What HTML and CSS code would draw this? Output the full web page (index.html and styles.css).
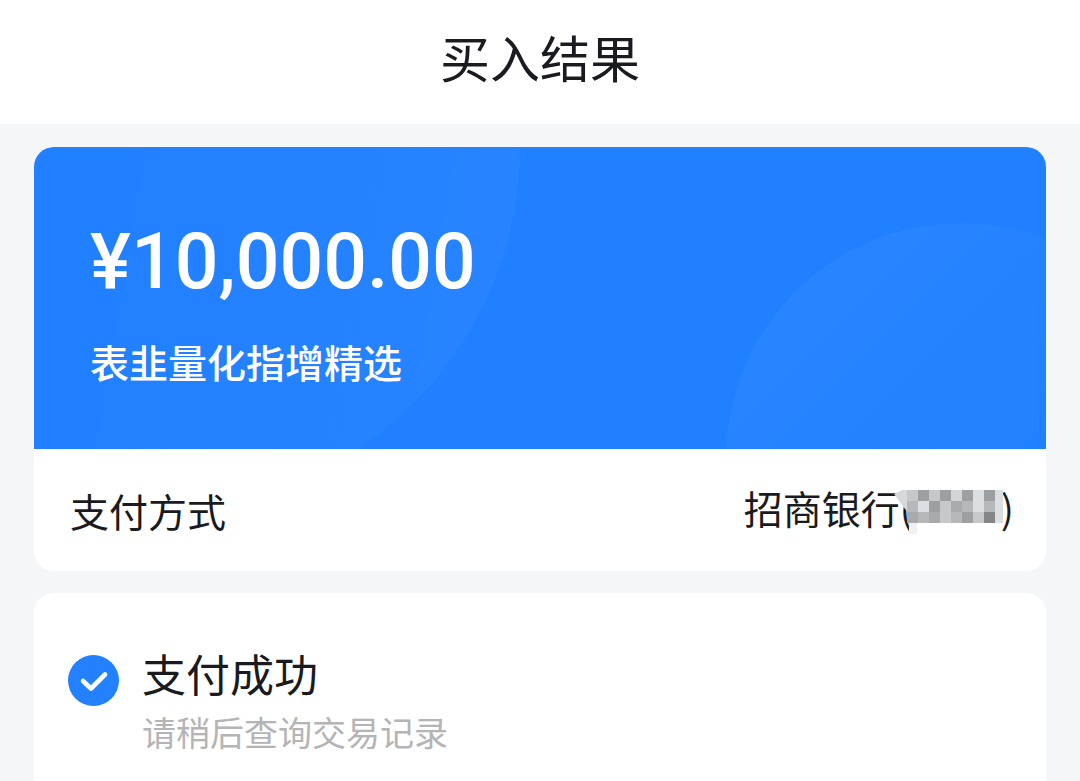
FILE: index.html
```
<!DOCTYPE html>
<html lang="zh-CN">
<head>
    <meta charset="UTF-8">
    <meta name="viewport" content="width=device-width, initial-scale=1.0">
    <title>买入结果</title>
    <link rel="stylesheet" href="styles.css">
</head>
<body>
    <header class="header">
        <h1>买入结果</h1>
    </header>

    <main class="content">
        <section class="card">
            <div class="banner">
                <svg class="banner-bg" viewBox="0 0 1012 302" preserveAspectRatio="none" aria-hidden="true">
                    <defs>
                        <linearGradient id="fadeLeft" x1="1" y1="0.6" x2="0.4" y2="0.5">
                            <stop offset="0" stop-color="#fff" stop-opacity="0.03"/>
                            <stop offset="1" stop-color="#fff" stop-opacity="0"/>
                        </linearGradient>
                        <linearGradient id="fadeRight" x1="0.1" y1="0.1" x2="0.6" y2="0.6">
                            <stop offset="0" stop-color="#fff" stop-opacity="0.04"/>
                            <stop offset="1" stop-color="#fff" stop-opacity="0"/>
                        </linearGradient>
                    </defs>
                    <circle cx="124" cy="0" r="362" fill="url(#fadeLeft)"/>
                    <circle cx="928" cy="312" r="236" fill="url(#fadeRight)"/>
                </svg>
                <div class="amount">¥10,000.00</div>
                <div class="fund">表韭量化指增精选</div>
            </div>
            <div class="pay-row">
                <span>支付方式</span>
                <span class="bank">招商银行(<span class="mask">
                    <svg viewBox="0 0 110 46" shape-rendering="crispEdges" aria-hidden="true">
                        <path d="M1 5l8-4h6v23z" fill="#d6d8da" shape-rendering="auto"/>
                        <path d="M16 34h8v11h-8z" fill="#f0f1f3"/>
                        <path d="M14 1h96v33H17V22l-3-3z" fill="#c6c8ca"/>
                        <path d="M25 1h11v11H25zM47 1h11v11H47zM69 1h11v11H69zM91 1h11v11H91zM36 12h11v11H36zM69 23h11v11H69z" fill="#9e9fa0"/>
                        <path d="M14 23h11v11H14zM58 12h11v11H58zM36 23h11v11H36z" fill="#a9aaac"/>
                        <path d="M14 12h11v11H14zM69 12h11v11H69zM91 12h11v11H91zM25 23h11v11H25zM58 23h11v11H58z" fill="#b6b8ba"/>
                        <path d="M25 12h11v11H25zM80 1h11v22H80zM102 1h8v33h-8z" fill="#dcdfe1"/>
                        <path d="M58 1h11v11H58z" fill="#d2d4d6"/>
                        <path d="M91 23h11v11H91z" fill="#858687"/>
                    </svg>
                </span>)</span>
            </div>
        </section>

        <section class="card status">
            <svg class="status-icon" viewBox="0 0 51 51" aria-hidden="true">
                <circle cx="25.5" cy="25.5" r="25.5" fill="#2381fe"/>
                <path d="M15 26l8 7.5 14-14" fill="none" stroke="#fff" stroke-width="4.6" stroke-linecap="round" stroke-linejoin="round"/>
            </svg>
            <div>
                <h2>支付成功</h2>
                <p>请稍后查询交易记录</p>
            </div>
        </section>
    </main>
</body>
</html>
```
FILE: styles.css
```
* {
    margin: 0;
    padding: 0;
    box-sizing: border-box;
}

body {
    background: #f4f6f8;
    color: #1a1b20;
    font-family: "Noto Sans CJK SC", sans-serif;
    min-height: 100vh;
    overflow: hidden;
}

.header {
    background: #fff;
    padding: 20px 0 32px;
    text-align: center;
}

h1 {
    font-size: 50px;
    font-weight: 400;
    line-height: 72px;
}

.content {
    display: flex;
    flex-direction: column;
    gap: 22px;
    padding: 23px 34px 0;
}

.card {
    background: #fff;
    border-radius: 20px;
    overflow: hidden;
}

.banner {
    position: relative;
    background: #2180ff;
    color: #fff;
    padding: 68px 56px 60px;
}

.banner-bg {
    position: absolute;
    inset: 0;
    width: 100%;
    height: 100%;
}

.amount {
    position: relative;
    font-family: Roboto, sans-serif;
    font-size: 77px;
    font-weight: 500;
    line-height: 94px;
}

.fund {
    position: relative;
    font-size: 39px;
    font-weight: 500;
    line-height: 56px;
    margin-top: 24px;
}

.pay-row {
    display: flex;
    justify-content: space-between;
    align-items: center;
    padding: 30px 32px 30px 36px;
    font-size: 39px;
    line-height: 56px;
}

.bank {
    display: flex;
    align-items: center;
    padding-bottom: 6px;
}

/* mosaic over the card number */
.mask {
    position: relative;
    width: 88px;
    height: 36px;
}

.mask svg {
    position: absolute;
    top: 0;
    left: -20px;
    width: 110px;
    height: 46px;
}

.status {
    display: flex;
    gap: 23px;
    padding: 48px 34px;
}

.status-icon {
    width: 51px;
    height: 51px;
    margin-top: 14px;
}

h2 {
    font-size: 44px;
    font-weight: 400;
    line-height: 64px;
}

.status p {
    color: #b4b4b6;
    font-size: 34px;
    line-height: 54px;
}
```
